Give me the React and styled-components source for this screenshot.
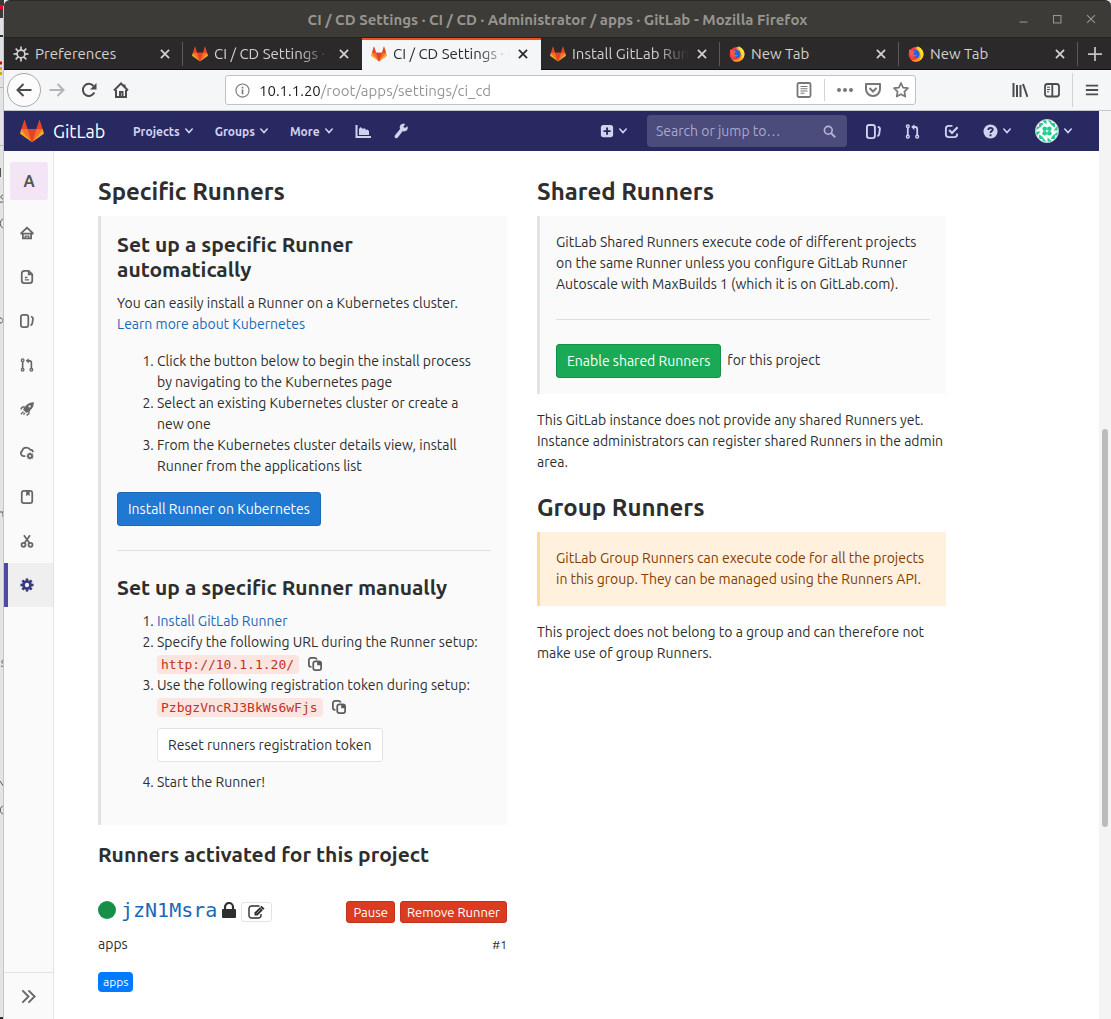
import React from 'react';
import styled, { createGlobalStyle, css } from 'styled-components';

const Global = createGlobalStyle`
  *, *::before, *::after { box-sizing: border-box; }
  html, body, #root { height: 100%; }
  body {
    margin: 0;
    overflow: hidden;
    background: #e4e4e4;
    color: #2e2e2e;
    font: 14px/21px Ubuntu, "Open Sans", "Noto Sans", sans-serif;
  }
  button, input { font: inherit; color: inherit; margin: 0; }
  button { cursor: pointer; }
  a { color: #1b69b6; text-decoration: none; }
  svg { display: block; flex: none; }
`;

/* ---------- window ---------- */
const Desktop = styled.div`
  display: flex;
  height: 100vh;
  background: #e4e4e4;
`;
const Behind = styled.svg`
  width: 4px;
  height: 100%;
`;
const Window = styled.div`
  flex: 1;
  min-width: 0;
  display: flex;
  flex-direction: column;
`;
const TitleBar = styled.header`
  display: grid;
  grid-template-columns: 1fr auto 1fr;
  align-items: center;
  height: 37px;
  flex: none;
  padding: 0 13px;
  border-top: 1px solid #2b2a28;
  border-radius: 6px 6px 0 0;
  background: #3c3b37;
  color: #96958f;
  font-size: 15px;
`;
const Title = styled.h1`
  grid-column: 2;
  margin: 0;
  font-size: inherit;
  font-weight: 700;
  white-space: nowrap;
`;
const WindowControls = styled.div`
  display: flex;
  justify-content: flex-end;
  gap: 20px;
`;
const BareButton = styled.button`
  display: inline-flex;
  align-items: center;
  justify-content: center;
  gap: 5px;
  padding: 0;
  border: 0;
  background: none;
`;

/* ---------- tabs ---------- */
const TabStrip = styled.nav`
  display: flex;
  flex: none;
  height: 33px;
  background: #2b292a;
  border-top: 1px solid #242223;
  border-bottom: 1px solid #0f0e0e;
  color: #d2d1cd;
  font-size: 15px;
`;
const Tab = styled.div`
  flex: 0 1 179px;
  min-width: 0;
  display: flex;
  align-items: center;
  gap: 6px;
  padding: 0 13px 0 9px;
  background: linear-gradient(#5a5858, #5a5858) right center / 1px 24px no-repeat;
  ${p => p.$edge && css`background: none;`}
  ${p => p.$active && css`
    background: #f5f6f7;
    box-shadow: inset 0 2px #f2511b, 0 1px #f5f6f7;
    color: #2a2a2e;
  `}
`;
const TabLabel = styled.a`
  flex: 1;
  min-width: 0;
  overflow: hidden;
  white-space: nowrap;
  color: inherit;
  ${p => p.$fade && css`mask-image: linear-gradient(to left, transparent 2px, #000 34px);`}
`;
const NewTab = styled(BareButton)`
  flex: 1;
  color: #c4c3c0;
`;

/* ---------- toolbar ---------- */
const Toolbar = styled.div`
  display: flex;
  align-items: center;
  flex: none;
  height: 41px;
  padding: 0 12px 0 3px;
  background: #f5f6f7;
  border-bottom: 1px solid #c3c7cb;
  color: #4c4c4c;
`;
const NavButtons = styled.div`
  display: flex;
  align-items: center;
  gap: 16px;
  width: 218px;
`;
const BackButton = styled(BareButton)`
  width: 34px;
  height: 34px;
  margin-right: -8px;
  border: 1px solid #a7a8a9;
  border-radius: 50%;
  background: #fcfcfc;
`;
const UrlBar = styled.label`
  flex: 1;
  display: flex;
  align-items: center;
  height: 30px;
  padding: 0 6px 0 9px;
  border: 1px solid #bfc3c9;
  border-radius: 3px;
  background: #fff;
  color: #777;
`;
const UrlInput = styled.input`
  flex: 1;
  min-width: 0;
  padding: 0 9px;
  border: 0;
  outline: 0;
  font-size: 15px;
  color: transparent;
  background: linear-gradient(to right, #1c1c1e 70px, #929292 70px);
  background-clip: text;
`;
const UrlActions = styled.div`
  display: flex;
  align-items: center;
  gap: 12px;
`;
const Divider = styled.span`
  width: 1px;
  height: ${p => p.$h}px;
  background: #cfd3d6;
`;
const RightTools = styled.div`
  display: flex;
  align-items: center;
  gap: 12px;
  margin-left: 96px;
`;
const PanelTools = styled.div`
  display: flex;
  gap: 16px;
`;

/* ---------- GitLab navigation ---------- */
const Viewport = styled.div`
  display: flex;
  flex: 1;
  min-height: 0;
`;
const Page = styled.div`
  flex: 1;
  min-width: 0;
  display: flex;
  flex-direction: column;
  background: #fff;
`;
const ScrollTrack = styled.div`
  width: 12px;
  padding: 318px 3px 0;
  background: #f4f4f4;
`;
const ScrollThumb = styled.div`
  height: 398px;
  border-radius: 3px;
  background: #babcbb;
`;
const NavBar = styled.nav`
  display: flex;
  align-items: center;
  flex: none;
  height: 40px;
  padding: 0 27px 0 16px;
  background: #292961;
  color: #d1d1f0;
`;
const Brand = styled.a`
  display: flex;
  align-items: center;
  gap: 9px;
  width: 113px;
  color: #fff;
  font-size: 18px;
`;
const Menu = styled.div`
  display: flex;
  align-items: center;
  gap: 22px;
  flex: 1;
`;
const MenuButton = styled(BareButton)`
  font-weight: 700;
  font-size: 12px;
`;
const Search = styled.label`
  display: flex;
  align-items: center;
  width: 200px;
  height: 32px;
  margin: 0 19px 0 20px;
  padding: 0 11px 0 9px;
  border-radius: 4px;
  background: #4b4b7c;
  color: #b5b5d6;
`;
const SearchInput = styled.input`
  flex: 1;
  min-width: 0;
  padding: 0;
  border: 0;
  outline: 0;
  background: none;
  &::placeholder { color: #a9a9cd; opacity: 1; }
`;
const UserMenu = styled.div`
  display: flex;
  align-items: center;
  gap: 24px;
`;

/* ---------- sidebar ---------- */
const Body = styled.div`
  flex: 1;
  min-height: 0;
  display: flex;
`;
const Sidebar = styled.aside`
  display: flex;
  flex-direction: column;
  width: 50px;
  flex: none;
  background: #fafafa;
  border-right: 1px solid #e3e3e3;
  color: #666;
`;
const ProjectAvatar = styled.a`
  display: flex;
  align-items: center;
  justify-content: center;
  width: 38px;
  height: 38px;
  margin: 11px 0 11px 6px;
  border-radius: 3px;
  background: #f3e5f5;
  color: #555;
  font-size: 16px;
  font-weight: 700;
`;
const SideLink = styled.a`
  display: flex;
  align-items: center;
  height: 44px;
  padding-left: 16px;
  color: #666;
  ${p => p.$active && css`
    padding-left: 12px;
    border-left: 4px solid #4b4ba3;
    background: #efefef;
    color: #393982;
  `}
`;
const Collapse = styled(BareButton)`
  height: 47px;
  margin-top: auto;
  border-top: 1px solid #e3e3e3;
  color: #666;
`;

/* ---------- content ---------- */
const Main = styled.main`
  flex: 1;
  min-width: 0;
  padding: 26px 44px 0;
  overflow: hidden;
`;
const Columns = styled.div`
  display: grid;
  grid-template-columns: 1fr 1fr;
  gap: 30px;
  max-width: 848px;
`;
const H3 = styled.h3`
  margin: 0 0 10px;
  font-size: 24px;
  line-height: 29px;
  * + & { margin-top: 20px; }
`;
const H4 = styled.h4`
  margin: ${p => (p.$spaced ? '17px 0 30px' : '0 0 11px')};
  font-size: 21px;
  line-height: 25px;
`;
const Box = styled.div`
  padding: 16px;
  border-left: 3px solid #e3e3e3;
  background: #fafafa;
  ${p => p.$warning && css`
    border-color: #ffd8a0;
    background: #fff1de;
    color: #853c00;
  `}
`;
const P = styled.p`
  margin: ${p => (p.$after ? '16px 0 0' : '0')};
`;
const List = styled.ol`
  margin: ${p => (p.$flush ? '0 0 16px' : '16px 0 15px')};
  padding: 0 4px 0 40px;
`;
const Rule = styled.hr`
  height: 1px;
  margin: 24px 0;
  border: 0;
  background: #dfdfdf;
`;
const tones = {
  blue: ['#1f78d1', '#1b69b6', '#fff'],
  green: ['#1aaa55', '#168f48', '#fff'],
  red: ['#db3b21', '#c0341d', '#fff'],
  plain: ['#fff', '#e3e3e3', '#2e2e2e'],
};
const Button = styled.button`
  height: 34px;
  padding: 6px 10px 5px;
  border: 1px solid ${p => tones[p.$tone][1]};
  border-radius: 3px;
  background: ${p => tones[p.$tone][0]};
  color: ${p => tones[p.$tone][2]};
  line-height: 21px;
  white-space: nowrap;
  ${p => p.$small && css`
    height: 22px;
    padding: 1px 6px;
    font-size: 13px;
    line-height: 18px;
  `}
`;
const BlockButton = styled(Button)`
  display: block;
  margin: 10px 0;
`;
const EnableRow = styled.div`
  display: flex;
  gap: 6px;
  line-height: 32px;
`;
const CodeLine = styled.div`
  display: flex;
  align-items: center;
  gap: 9px;
  height: 22px;
`;
const Code = styled.code`
  padding: 2px 5px 2px 4px;
  border-radius: 4px;
  background: #fbe5e1;
  color: #c0341d;
  font: 13px/15px "DejaVu Sans Mono", monospace;
`;
const CopyButton = styled(BareButton)`
  color: #5c5c5c;
`;
const RunnerRow = styled.div`
  display: flex;
  align-items: center;
  gap: 5px;
  height: 30px;
`;
const RunnerName = styled.div`
  display: flex;
  align-items: center;
  gap: 5px;
  padding-bottom: 4px;
`;
const Status = styled.span`
  width: 18px;
  height: 18px;
  border-radius: 50%;
  background: #168f48;
`;
const RunnerLink = styled.a`
  font: 20px/24px "DejaVu Sans Mono", monospace;
`;
const EditButton = styled(BareButton)`
  width: 31px;
  height: 20px;
  margin-right: auto;
  border: 1px solid #e3e3e3;
  border-radius: 3px;
  background: #fff;
`;
const RunnerInfo = styled.div`
  display: flex;
  justify-content: space-between;
  margin: 7px 0 16px;
`;
const Small = styled.small`
  font-size: 12px;
`;
const Badge = styled.span`
  display: inline-block;
  padding: 0 5px;
  border-radius: 4px;
  background: #007bff;
  color: #fff;
  font-size: 12px;
  line-height: 20px;
`;

/* ---------- icons ---------- */
const Icon = ({ size = 14, w = 2, children, ...rest }) => (
  <svg width={size} height={size} viewBox="0 0 16 16" fill="none" stroke="currentColor" strokeWidth={w} aria-hidden="true" {...rest}>
    {children}
  </svg>
);
const Chevron = () => (
  <svg width="8" height="6" viewBox="0 0 8 6" fill="none" stroke="currentColor" strokeWidth="1.600" strokeLinecap="round" aria-hidden="true">
    <path d="M.8 1L4 4.500 7.200 1" />
  </svg>
);
const Cross = ({ size = 10, w = 1.8 }) => <Icon size={size} w={w * 16 / size}><path d="M1.500 1.500l13 13M14.500 1.500l-13 13" /></Icon>;
const Tanuki = ({ size }) => (
  <svg width={size} height={size} viewBox="0 0 36 34" aria-hidden="true">
    <path fill="#e24329" d="M2 14L6 1.500c.3-.8 1.300-.8 1.600 0L11.500 14h13l3.900-12.500c.3-.8 1.300-.8 1.600 0L34 14 18 34z" />
    <path fill="#fc6d26" d="M18 34L11.500 14H2zM18 34l6.500-20H34z" />
    <path fill="#fca326" d="M2 14l-1.800 6c-.2.600 0 1.200.500 1.500L18 34zM34 14l1.800 6c.2.600 0 1.200-.500 1.500L18 34z" />
    <path fill="#e24329" d="M11.500 14h13L18 34z" />
  </svg>
);
const Firefox = () => (
  <svg width="16" height="16" viewBox="0 0 16 16" aria-hidden="true">
    <circle cx="8" cy="8.300" r="7.400" fill="#ff3750" />
    <path fill="#ff9a1f" d="M7 1.500c5-1 9 2.600 8.500 7.300-.5 4-3.700 6.900-7.500 6.900-3 0-4-1-4.500-2 4 1 8-1 8-5z" />
    <path fill="#ffe226" d="M9 .3c4 1 6.800 4.700 6.300 8.400-.4 3-2 4.500-3.800 5.600 2-3 1.600-5 .5-7.300C11 5 9.500 3.500 9 .3z" />
    <circle cx="7.600" cy="8" r="3.900" fill="#1d68d8" />
    <path fill="#ff5a36" d="M1 3.500c1 .2 2 .4 3 1.400 1.300-.3 2.400.1 3 .7L5.200 7.500c.6 1.500 2 2 3.600 1.300-1 2.500-4.300 2.700-6 .6C1.500 8 .800 5.500 1 3.500z" />
  </svg>
);
const gearTeeth = n => Array.from({ length: n }, (_, i) => (
  <path key={i} d="M8 0.500v3.500" transform={`rotate(${(360 / n) * i} 8 8)`} />
));
const PrefGear = () => (
  <Icon size={16} w={1.700}><circle cx="8" cy="8" r="3.900" />{gearTeeth(8)}</Icon>
);
const Gear = ({ size = 14 }) => (
  <Icon size={size} w={3}><circle cx="8" cy="8" r="4" />{gearTeeth(8)}</Icon>
);
const Issues = ({ size = 15 }) => (
  <Icon size={size}><rect x="1" y="1" width="8.500" height="14" rx="2.500" /><path d="M12.500 3c1.800.3 2.500 1 2.300 2.500l-.7 5c-.2 1.500-.8 2.200-2.100 2.500" /></Icon>
);
const MergeRequest = ({ size = 15 }) => (
  <Icon size={size} w={1.500}>
    <circle cx="3" cy="2.500" r="1.500" /><circle cx="3" cy="13.500" r="1.500" /><circle cx="13" cy="13.500" r="1.500" />
    <path d="M3 4v8M13 12V5.500C13 4 12.300 3.200 11 3.200H8" strokeWidth="1.900" />
    <path d="M10 .3v6L6.500 3.200z" fill="currentColor" stroke="none" />
  </Icon>
);
const Copy = () => (
  <Icon size={14}>
    <path d="M4 11.300H3.500A2.500 2.500 0 0 1 1 8.800V3.500A2.500 2.500 0 0 1 3.500 1h4A2.500 2.500 0 0 1 10 3" />
    <rect x="6" y="5" width="9" height="10" rx="2.500" />
    <path d="M10.500 5H13l2 2v2.500h-4.500z" fill="currentColor" stroke="none" />
  </Icon>
);
const Identicon = () => (
  <svg width="24" height="24" viewBox="0 0 24 24" aria-hidden="true">
    <circle cx="12" cy="12" r="11.500" fill="#fff" stroke="#c9c9e4" />
    <g fill="#21d08f">
      <circle cx="9.700" cy="9.700" r="2.300" /><circle cx="14.300" cy="9.700" r="2.300" /><circle cx="9.700" cy="14.300" r="2.300" /><circle cx="14.300" cy="14.300" r="2.300" />
      {[0, 90, 180, 270].map(a => (
        <path key={a} transform={`rotate(${a} 12 12)`} d="M7 1.800l4.500-.6v4.300zM12.500 1l4 1.200v3.800zM15.500 5.500L20 4.500v4zM4 4.500h4.500L4 8.500z" />
      ))}
    </g>
  </svg>
);

const sideItems = [
  ['Project overview', <Icon><path d="M1 8.500L8 2l7 6.500M.5 8.700h15M3.300 8.500V14h9.400V8.500" /><path d="M6 14v-2.500h4V14" strokeWidth="1.500" /></Icon>],
  ['Repository', <Icon><path d="M10 1H5a3 3 0 0 0-3 3v8a3 3 0 0 0 3 3h6a3 3 0 0 0 3-3V5z" /><path d="M9 1l5 5H9z" fill="currentColor" stroke="none" /><path d="M5.500 8.500h3M5.500 11.300h5" strokeWidth="1.600" /></Icon>],
  ['Issues', <Issues size={14} />],
  ['Merge requests', <MergeRequest size={14} />],
  ['CI / CD', <Icon w={1.600}><path d="M4.500 8.500C7 4 10 1.200 15 1c-.1 5-3 8-7.500 10.500z" fill="currentColor" /><circle cx="11" cy="5" r="1.300" fill="#fafafa" stroke="none" /><path d="M5.500 5.500L2.500 6 .8 8.500M10.500 10.500l-.5 3L7.500 15.200M4 11l-3 3M5.500 12.500L4 14.500" /></Icon>],
  ['Operations', <Icon><path d="M6 11.500H4A3.200 3.200 0 0 1 2.500 5.600C3 3 5 1.800 8 2c2 .1 2.800 1 3.500 2 2 0 3.200 1 3.500 3" /><circle cx="11.500" cy="11.500" r="2.200" /><path d="M11.500 7.500v2M11.500 13.500v2M7.500 11.500h2M13.500 11.500h2M8.700 8.700l1.300 1.300M13 13l1.400 1.400M8.700 14.400L10 13M13 10l1.400-1.300" strokeWidth="1.500" /></Icon>],
  ['Wiki', <Icon><rect x="2" y="1" width="12" height="14" rx="2.500" /><path d="M7 1.500h4V7L9 5.500 7 7z" fill="currentColor" stroke="none" /></Icon>],
  ['Snippets', <Icon><circle cx="4" cy="12.300" r="2.300" /><circle cx="12" cy="12.300" r="2.300" /><path d="M4.500 1.500L11 10.500M11.500 1.500L5 10.500" /></Icon>],
  ['Settings', <Gear />],
];

const tabs = [
  { label: 'Preferences', icon: <PrefGear /> },
  { label: 'CI / CD Settings · CI / CD', icon: <Tanuki size={16} />, fade: true, edge: true },
  { label: 'CI / CD Settings · CI / CD', icon: <Tanuki size={16} />, fade: true, active: true },
  { label: 'Install GitLab Runner', icon: <Tanuki size={16} />, fade: true },
  { label: 'New Tab', icon: <Firefox /> },
  { label: 'New Tab', icon: <Firefox /> },
];

const Browser = () => (
  <>
    <TitleBar>
      <Title>CI / CD Settings · CI / CD · Administrator / apps · GitLab - Mozilla Firefox</Title>
      <WindowControls>
        <BareButton aria-label="Minimize"><Icon size={14} w={1.200}><path d="M4 11.500h9" /></Icon></BareButton>
        <BareButton aria-label="Maximize"><Icon size={14} w={1.200}><rect x="4" y="4" width="8.500" height="8.500" /></Icon></BareButton>
        <BareButton aria-label="Close window"><Icon size={14} w={1.300}><path d="M3.500 3.500l9 9M12.500 3.500l-9 9" /></Icon></BareButton>
      </WindowControls>
    </TitleBar>
    <TabStrip>
      {tabs.map((t, i) => (
        <Tab key={i} $active={t.active} $edge={t.edge}>
          {t.icon}
          <TabLabel href="#" $fade={t.fade}>{t.label}</TabLabel>
          <BareButton aria-label="Close tab"><Cross /></BareButton>
        </Tab>
      ))}
      <NewTab aria-label="New tab"><Icon size={14}><path d="M8 0v16M0 8h16" /></Icon></NewTab>
    </TabStrip>
    <Toolbar>
      <NavButtons>
        <BackButton aria-label="Back"><Icon size={16}><path d="M15.500 8H1.500M7.500 2L1.500 8l6 6" /></Icon></BackButton>
        <BareButton aria-label="Forward"><Icon size={16} stroke="#b3b4b5"><path d="M.5 8h14M8.500 2l6 6-6 6" /></Icon></BareButton>
        <BareButton aria-label="Reload"><Icon size={16}><path d="M13.300 10.500A6 6 0 1 1 12.500 4" /><path d="M15.500 1v6.500H9z" fill="currentColor" stroke="none" /></Icon></BareButton>
        <BareButton aria-label="Home"><Icon size={16}><path d="M1 8.500L8 1.500l7 7M3 8v7h10V8M7 15v-5h2.500v5" /><path d="M11.500 2.500v2.500" /></Icon></BareButton>
      </NavButtons>
      <UrlBar>
        <Icon size={15} w={1.200}><circle cx="8" cy="8" r="7" /><path d="M8 7v5M8 4v1.800" strokeWidth="1.700" /></Icon>
        <UrlInput aria-label="Address" defaultValue="10.1.1.20/root/apps/settings/ci_cd" />
        <UrlActions>
          <Icon size={16} w={1.800}><rect x="1.500" y="1" width="13" height="14" rx="1.500" /><path d="M4.500 4.500h7M4.500 6.700h7M4.500 9h7M4.500 11.300h4" strokeWidth="1.100" /></Icon>
          <Divider $h={22} />
          <Icon size={16} fill="currentColor" stroke="none"><circle cx="2" cy="8" r="2" /><circle cx="8" cy="8" r="2" /><circle cx="14" cy="8" r="2" /></Icon>
          <Icon size={16}><path d="M1 2h14v5a7 7 0 0 1-14 0z" strokeLinejoin="round" /><path d="M4.500 6L8 9.500 11.500 6" /></Icon>
          <Icon size={16} w={1.700} strokeLinejoin="round"><path d="M8 1l2.100 4.600 4.900.6-3.600 3.400.9 5L8 12.200 3.700 14.600l.9-5L1 6.200l4.900-.6z" /></Icon>
        </UrlActions>
      </UrlBar>
      <RightTools>
        <PanelTools>
          <BareButton aria-label="Library"><Icon size={16}><path d="M1.500 1v14M5 3v12M8.500 3v12M11 2l4.500 13" /></Icon></BareButton>
          <BareButton aria-label="Sidebars"><Icon size={16} w={1.800}><rect x="1" y="2" width="14" height="12.500" rx="2.500" /><path d="M8.300 2v12" /><path d="M3 5.200h3M3 7.500h3M3 9.800h2" strokeWidth="1" /></Icon></BareButton>
        </PanelTools>
        <Divider $h={34} />
        <BareButton aria-label="Open menu"><Icon size={14} w={2.200}><path d="M1 3h14M1 8h14M1 13h14" /></Icon></BareButton>
      </RightTools>
    </Toolbar>
  </>
);

const Nav = () => (
  <NavBar>
    <Brand href="#"><Tanuki size={24} />GitLab</Brand>
    <Menu>
      <MenuButton>Projects <Chevron /></MenuButton>
      <MenuButton>Groups <Chevron /></MenuButton>
      <MenuButton>More <Chevron /></MenuButton>
      <BareButton aria-label="Charts">
        <Icon size={16}><path d="M1.500 2v12H16" /><path d="M4 12V6l1.500-2L8 6l1.500-1L11 7l1.500-.5L14 8v4z" fill="currentColor" stroke="none" /></Icon>
      </BareButton>
      <BareButton aria-label="Admin area">
        <Icon size={16} fill="currentColor" stroke="none"><path d="M14.400 3.200l-2.600 1.900-1.400-1.400L12.200 1.100C10.400.3 8 .8 7.100 2.700c-.6 1.200-.5 2.300 0 3.300L2 12.300c-.7.900-.5 2 .3 2.600.8.600 1.900.400 2.500-.4L9.600 8.300c1.600.4 3.400 0 4.400-1.300.9-1.100 1-2.600.4-3.800z" /></Icon>
      </BareButton>
    </Menu>
    <MenuButton aria-label="New…">
      <Icon size={14} fill="currentColor" stroke="none"><path fillRule="evenodd" d="M4 1h8a3 3 0 0 1 3 3v8a3 3 0 0 1-3 3H4a3 3 0 0 1-3-3V4a3 3 0 0 1 3-3zm3 3v3H4v2.200h3v3h2.200v-3h3V7h-3V4z" /></Icon>
      <Chevron />
    </MenuButton>
    <Search>
      <SearchInput aria-label="Search" placeholder="Search or jump to…" />
      <Icon size={13}><circle cx="6.500" cy="6.500" r="4.800" /><path d="M10 10l5 5" strokeWidth="2.400" /></Icon>
    </Search>
    <UserMenu>
      <BareButton aria-label="Issues"><Issues /></BareButton>
      <BareButton aria-label="Merge requests"><MergeRequest /></BareButton>
      <BareButton aria-label="To-do"><Icon size={15}><path d="M9 2H5a3 3 0 0 0-3 3v6a3 3 0 0 0 3 3h6a3 3 0 0 0 3-3v-1" /><path d="M5.500 6.500l3 3L14.500 3.500" strokeWidth="2.300" /></Icon></BareButton>
      <MenuButton aria-label="Help">
        <Icon size={15}><circle cx="8" cy="8" r="7.500" fill="currentColor" stroke="none" /><path d="M5.700 6.300c0-3 4.700-2.800 4.700-.3C10.400 7.500 8 7.600 8 9.500M8 11v2" stroke="#292961" /></Icon>
        <Chevron />
      </MenuButton>
      <MenuButton aria-label="Account"><Identicon /><Chevron /></MenuButton>
    </UserMenu>
  </NavBar>
);

const Side = () => (
  <Sidebar>
    <ProjectAvatar href="#">A</ProjectAvatar>
    {sideItems.map(([name, icon]) => (
      <SideLink key={name} href="#" aria-label={name} $active={name === 'Settings'}>{icon}</SideLink>
    ))}
    <Collapse aria-label="Expand sidebar">
      <Icon size={15} strokeLinecap="round"><path d="M2 2l6 6-6 6M8.500 2l6 6-6 6" /></Icon>
    </Collapse>
  </Sidebar>
);

const SpecificRunners = () => (
  <section>
    <H3>Specific Runners</H3>
    <Box>
      <H4>Set up a specific Runner automatically</H4>
      <P>You can easily install a Runner on a Kubernetes cluster. <a href="#">Learn more about Kubernetes</a></P>
      <List>
        <li>Click the button below to begin the install process by navigating to the Kubernetes page</li>
        <li>Select an existing Kubernetes cluster or create a new one</li>
        <li>From the Kubernetes cluster details view, install Runner from the applications list</li>
      </List>
      <Button $tone="blue">Install Runner on Kubernetes</Button>
      <Rule />
      <H4>Set up a specific Runner manually</H4>
      <List $flush>
        <li><a href="#">Install GitLab Runner</a></li>
        <li>
          Specify the following URL during the Runner setup:
          <CodeLine><Code>http://10.1.1.20/</Code><CopyButton aria-label="Copy URL"><Copy /></CopyButton></CodeLine>
        </li>
        <li>
          Use the following registration token during setup:
          <CodeLine><Code>PzbgzVncRJ3BkWs6wFjs</Code><CopyButton aria-label="Copy token"><Copy /></CopyButton></CodeLine>
          <BlockButton $tone="plain">Reset runners registration token</BlockButton>
        </li>
        <li>Start the Runner!</li>
      </List>
    </Box>
    <H4 $spaced>Runners activated for this project</H4>
    <RunnerRow>
      <RunnerName>
        <Status />
        <RunnerLink href="#">jzN1Msra</RunnerLink>
        <svg width="14" height="16" viewBox="0 0 14 16" fill="none" stroke="#2e2e2e" aria-hidden="true">
          <rect y="7" width="14" height="9" rx="1" fill="#2e2e2e" stroke="none" />
          <path d="M3 8V5a4 4 0 0 1 8 0v3" strokeWidth="2.200" />
        </svg>
      </RunnerName>
      <EditButton aria-label="Edit runner">
        <svg width="18" height="14" viewBox="0 0 18 14" fill="none" stroke="#2e2e2e" strokeWidth="1.400" aria-hidden="true">
          <path d="M11.500 1h-8A2.500 2.500 0 0 0 1 3.500v7A2.500 2.500 0 0 0 3.500 13h7a2.500 2.500 0 0 0 2.500-2.500V9" />
          <path d="M6.500 10.500V7.500L13.500.8l3 2.700-7 7z" fill="#2e2e2e" stroke="none" />
          <path d="M12 2.300l3 2.700M8.500 8.500l4-4" stroke="#fff" strokeWidth=".6" />
        </svg>
      </EditButton>
      <Button $tone="red" $small>Pause</Button>
      <Button $tone="red" $small>Remove Runner</Button>
    </RunnerRow>
    <RunnerInfo><span>apps</span><Small>#1</Small></RunnerInfo>
    <Badge>apps</Badge>
  </section>
);

const OtherRunners = () => (
  <section>
    <H3>Shared Runners</H3>
    <Box>
      <P>GitLab Shared Runners execute code of different projects on the same Runner unless you configure GitLab Runner Autoscale with MaxBuilds 1 (which it is on GitLab.com).</P>
      <Rule />
      <EnableRow><Button $tone="green">Enable shared Runners</Button>for this project</EnableRow>
    </Box>
    <P $after>This GitLab instance does not provide any shared Runners yet. Instance administrators can register shared Runners in the admin area.</P>
    <H3>Group Runners</H3>
    <Box $warning>
      <P>GitLab Group Runners can execute code for all the projects in this group. They can be managed using the Runners API.</P>
    </Box>
    <P $after>This project does not belong to a group and can therefore not make use of group Runners.</P>
  </section>
);

export default function App() {
  return (
    <>
      <Global />
      <Desktop>
        <Behind aria-hidden="true">
          <rect width="4" height="18" fill="#3c3b37" />
          <rect y="5" width="4" height="4" fill="#e6002a" />
          <rect y="18" width="4" height="69" fill="#dfe1e4" />
          <path d="M0 36h3M0 1018h4" stroke="#2e2e2e" strokeWidth="2" />
          <path d="M0 63h2" stroke="#e00000" strokeWidth="3" />
          <path d="M0 68.500h2M0 73.500h2" stroke="#dba500" strokeWidth="3" />
          <path d="M0 87.500h4M0 145.500h4" stroke="#b5b5b5" />
          <path d="M.5 168v9M3.500 166v11M4 195c-4 0-4 3-1 4 2 1 1 4-3 3M4 219c-5 0-5 9 0 9M0 318c4 0 4 5 0 5M0 512h3v4l1 4M4 660c-3 0-3 3 0 4 0 2-1 3-3 2M0 781l4 6M4 806c-5 0-5 8 0 8" stroke="#555" fill="none" />
          <rect x="3" y="6" width="1" height="1013" fill="#c4c4c4" />
        </Behind>
        <Window>
          <Browser />
          <Viewport>
            <Page>
              <Nav />
              <Body>
                <Side />
                <Main>
                  <Columns>
                    <SpecificRunners />
                    <OtherRunners />
                  </Columns>
                </Main>
              </Body>
            </Page>
            <ScrollTrack><ScrollThumb /></ScrollTrack>
          </Viewport>
        </Window>
      </Desktop>
    </>
  );
}
